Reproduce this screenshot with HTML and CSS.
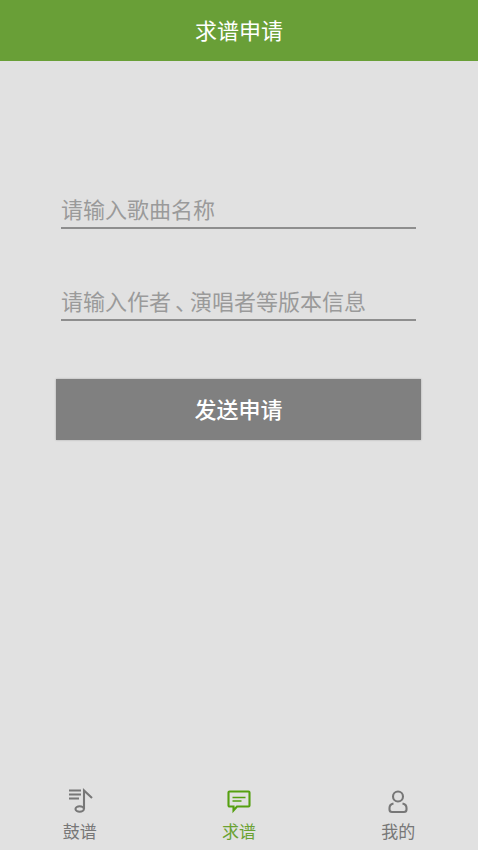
FILE: index.html
```html
<!DOCTYPE html>
<html lang="zh-CN">
<head>
  <meta charset="UTF-8">
  <title>求谱申请</title>
  <meta name="viewport" content="width=device-width, initial-scale=1.0">
  <link rel="stylesheet" href="styles.css">
</head>
<body>
  <div class="app">
    <header class="top-bar"><span>求谱申请</span></header>

    <form class="request-form" autocomplete="off">
      <div class="field">请输入歌曲名称</div>
      <div class="field field-second">请输入作者<span class="pause">、</span>演唱者等版本信息</div>
      <button type="submit" class="btn">发送申请</button>
    </form>

    <nav class="tab-bar">
      <a class="tab">
        <svg class="tab-icon" viewBox="0 0 26 26" fill="none" stroke="currentColor" stroke-width="2.100">
          <path d="M2 2.500h12M2 6.500h12M2 10.500h10"/>
          <path d="M17 21V2.500l8 7.500"/>
          <ellipse cx="12.700" cy="21" rx="4.200" ry="2.700"/>
        </svg>
        <span>鼓谱</span>
      </a>
      <a class="tab tab-active">
        <svg class="tab-icon" viewBox="0 0 26 26" fill="none" stroke="currentColor" stroke-width="2.100">
          <path d="M3.500 3.500h19a1 1 0 0 1 1 1v13a1 1 0 0 1-1 1H11l-3.500 4v-4h-4a1 1 0 0 1-1-1v-13a1 1 0 0 1 1-1z"/>
          <path d="M6.500 9.500h13M6.500 13h9" stroke-width="1.500"/>
        </svg>
        <span>求谱</span>
      </a>
      <a class="tab">
        <svg class="tab-icon" viewBox="0 0 26 26" fill="none" stroke="currentColor" stroke-width="2.100">
          <circle cx="13" cy="8.500" r="5"/>
          <path d="M8.500 15.500c-2.500.5-4 2-4 4.500v1.500c0 1.500 1 2.500 2.500 2.500h12c1.500 0 2.500-1 2.500-2.500V20c0-2.500-1.500-4-4-4.500"/>
        </svg>
        <span>我的</span>
      </a>
    </nav>
  </div>
</body>
</html>
```

FILE: styles.css
```css
* { box-sizing: border-box; }
html, body { height: 100%; }
body {
  margin: 0;
  font-family: "Roboto", "Noto Sans CJK SC", sans-serif;
  background: #e1e1e1;
}
.app {
  height: 850px;
  display: flex;
  flex-direction: column;
}
.top-bar {
  height: 61px;
  flex: none;
  display: flex;
  align-items: center;
  justify-content: center;
  padding-bottom: 4px;
  background: #699f37;
  color: #fff;
  font-size: 22px;
}
.request-form {
  flex: 1;
  display: flex;
  flex-direction: column;
  padding: 132px 57px 0 56px;
}
.field {
  width: 355px;
  height: 36px;
  margin-left: 5px;
  border-bottom: 2px solid #8e8e8e;
  color: #9a9a9a;
  font-size: 22px;
  line-height: 36px;
  white-space: nowrap;
}
.field-second { margin-top: 56px; }
.pause { margin-left: 4px; letter-spacing: -7px; }
.btn {
  width: 365px;
  height: 61px;
  margin-top: 58px;
  padding: 0 0 4px;
  border: none;
  background: #808080;
  color: #fff;
  font-family: inherit;
  font-size: 22px;
  font-weight: 500;
  box-shadow: 0 0 2px rgba(0,0,0,0.25);
  cursor: pointer;
}
.tab-bar {
  height: 70px;
  flex: none;
  display: flex;
}
.tab {
  flex: 1;
  display: flex;
  flex-direction: column;
  align-items: center;
  color: #777;
  font-size: 17px;
  line-height: 24px;
}
.tab-icon {
  width: 26px;
  height: 26px;
  margin-top: 8px;
  margin-bottom: 6px;
  display: block;
}
.tab-active { color: #6aa232; }
.tab-active .tab-icon { color: #55a010; }
```
